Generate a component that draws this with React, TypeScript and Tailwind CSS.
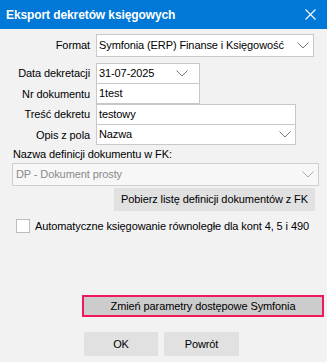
import React from "react";

const Chevron = ({ color = "#555" }: { color?: string }) => (
  <svg width="12" height="7" viewBox="0 0 12 7" className="shrink-0">
    <path d="M0.5 0.5 L6 6 L11.5 0.5" fill="none" stroke={color} strokeWidth="1" />
  </svg>
);

export default function App() {
  const font = { fontFamily: '"Liberation Sans", Arial, sans-serif' };
  return (
    <div className="w-[327px] h-[362px] bg-[#f2f2f2] text-[11px] tracking-[-0.1px] text-black flex flex-col overflow-hidden whitespace-nowrap" style={font}>
      <div className="h-[29px] bg-[#0078d7] flex items-center justify-between pl-[6px] pr-[11px] shrink-0">
        <span className="text-white font-bold text-[12px] tracking-[-0.1px]">Eksport dekretów księgowych</span>
        <svg width="11" height="11" viewBox="0 0 11 11">
          <path d="M0.5 0.5 L10.5 10.5 M10.5 0.5 L0.5 10.5" stroke="#fff" strokeWidth="1.1" />
        </svg>
      </div>
      <div className="flex flex-col pt-[5px]">
        <div className="flex items-center h-[23px]">
          <div className="w-[91px] text-right pr-[1px]">Format</div>
          <div className="ml-[5px] w-[218px] h-[23px] bg-white border border-[#c8c8c8] flex items-center justify-between pl-[2px] pr-[4px]">
            <span>Symfonia (ERP) Finanse i Księgowość</span>
            <Chevron color="#777" />
          </div>
        </div>
        <div className="flex items-center h-[21px] mt-[6px]">
          <div className="w-[91px] text-right pr-[1px]">Data dekretacji</div>
          <div className="ml-[5px] w-[104px] h-[21px] bg-white border border-[#c8c8c8] flex items-center justify-between pl-[2px] pr-[11px]">
            <span>31-07-2025</span>
            <Chevron color="#777" />
          </div>
        </div>
        <div className="flex items-center h-[20px]">
          <div className="w-[91px] text-right pr-[1px]">Nr dokumentu</div>
          <div className="ml-[5px] w-[104px] h-[21px] -mt-px bg-white border border-[#c8c8c8] flex items-center pl-[2px]">
            <span>1test</span>
          </div>
        </div>
        <div className="flex items-center h-[21px]">
          <div className="w-[91px] text-right pr-[1px]">Treść dekretu</div>
          <div className="ml-[5px] w-[200px] h-[21px] bg-white border border-[#c8c8c8] flex items-center pl-[2px]">
            <span>testowy</span>
          </div>
        </div>
        <div className="flex items-center h-[20px]">
          <div className="w-[91px] text-right pr-[1px]">Opis z pola</div>
          <div className="ml-[5px] w-[200px] h-[21px] -mt-px bg-white border border-[#c8c8c8] flex items-center justify-between pl-[2px] pr-[4px]">
            <span>Nazwa</span>
            <Chevron color="#777" />
          </div>
        </div>
        <div className="pl-[13px] mt-[2px] h-[15px] leading-[15px]">Nazwa definicji dokumentu w FK:</div>
        <div className="ml-[12px] w-[307px] h-[23px] mt-[1px] bg-[#f7f7f7] border border-[#cfcfcf] flex items-center justify-between pl-[3px] pr-[4px]">
          <span className="text-[#8a8a8a]">DP - Dokument prosty</span>
          <Chevron color="#aaa" />
        </div>
        <div className="flex justify-start pl-[114px] mt-[2px]">
          <div className="w-[201px] h-[23px] bg-[#e1e1e1] flex items-center justify-center">
            Pobierz listę definicji dokumentów z FK
          </div>
        </div>
        <div className="flex items-center pl-[16px] mt-[8px] h-[14px]">
          <div className="w-[14px] h-[14px] bg-white border border-[#bdbdbd] shrink-0" />
          <span className="ml-[5px]">Automatyczne księgowanie równoległe dla kont 4, 5 i 490</span>
        </div>
        <div className="flex pl-[82px] mt-[62px]">
          <div className="w-[242px] h-[22px] bg-[#cccccc] border-2 border-[#f0185a] flex items-center justify-center">
            Zmień parametry dostępowe Symfonia
          </div>
        </div>
        <div className="flex pl-[84px] mt-[15px] gap-[6px]">
          <div className="w-[74px] h-[24px] bg-[#e1e1e1] flex items-center justify-center">OK</div>
          <div className="w-[75px] h-[24px] bg-[#e1e1e1] flex items-center justify-center">Powrót</div>
        </div>
      </div>
    </div>
  );
}
